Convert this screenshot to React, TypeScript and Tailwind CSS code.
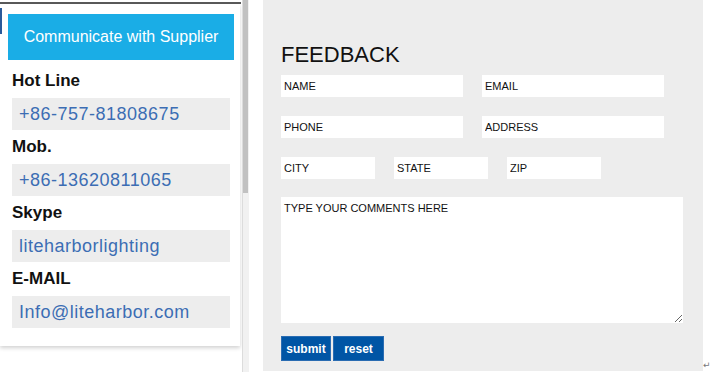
import React from "react";

const contacts = [
  { label: "Hot Line", value: "+86-757-81808675" },
  { label: "Mob.", value: "+86-13620811065" },
  { label: "Skype", value: "liteharborlighting" },
  { label: "E-MAIL", value: "Info@liteharbor.com" },
];

const field =
  "h-[22px] bg-white pl-[3px] text-[11px] text-[#111] outline-none placeholder:text-[#111]";

export default function App() {
  return (
    <div className="flex items-start w-[711px] h-[383px] overflow-hidden bg-white font-['Liberation_Sans',Arial,sans-serif]">
      {/* ── Contact sidebar ── */}
      <div className="flex shrink-0 flex-col w-[242px]">
        <div className="mt-[2px] h-[2px] w-[241px] bg-[#5a5a5a]" />
        <div className="flex w-[240px] bg-white shadow-[0_2px_4px_rgba(0,0,0,0.18)]">
          <div className="mt-[4px] h-[26px] w-[2px] bg-[#2a5a9a]" />
          <div className="flex flex-1 flex-col pt-[10px] pl-[6px] pr-[6px] pb-[18px]">
            <button className="h-[46px] w-full bg-[#1aade6] text-[16px] text-white">
              Communicate with Supplier
            </button>
            <div className="mt-[4px] flex flex-col px-[4px]">
              {contacts.map((c) => (
                <div key={c.label} className="flex flex-col">
                  <div className="h-[34px] leading-[34px] text-[17px] font-bold text-[#111]">
                    {c.label}
                  </div>
                  <div className="h-[32px] bg-[#ededed] pl-[7px] leading-[32px] text-[18px] tracking-[0.5px] text-[#3c6db4]">
                    {c.value}
                  </div>
                </div>
              ))}
            </div>
          </div>
        </div>
      </div>

      {/* scrollbar */}
      <div className="h-[372px] w-[7px] shrink-0 border-l border-[#dcdcdc] bg-[#f1f1f1] pr-px">
        <div className="h-[193px] w-full bg-[#c1c1c1]" />
      </div>

      {/* ── Feedback form ── */}
      <div className="ml-[14px] flex shrink-0 items-end">
        <div className="flex h-[371px] w-[440px] shrink-0 flex-col bg-[#ededed] pl-[18px] pt-[42px]">
          <h2 className="h-[26px] leading-[26px] text-[22px] text-[#111]">FEEDBACK</h2>
          <div className="mt-[7px] flex flex-col gap-[19px]">
            <div className="flex gap-[19px]">
              <input className={`${field} w-[182px]`} placeholder="NAME" />
              <input className={`${field} w-[182px]`} placeholder="EMAIL" />
            </div>
            <div className="flex gap-[19px]">
              <input className={`${field} w-[182px]`} placeholder="PHONE" />
              <input className={`${field} w-[182px]`} placeholder="ADDRESS" />
            </div>
            <div className="flex gap-[19px]">
              <input className={`${field} w-[94px]`} placeholder="CITY" />
              <input className={`${field} w-[94px]`} placeholder="STATE" />
              <input className={`${field} w-[94px]`} placeholder="ZIP" />
            </div>
          </div>
          <textarea
            className="mt-[18px] h-[126px] w-[402px] bg-white p-[3px] text-[11px] text-[#111] outline-none placeholder:text-[#111]"
            placeholder="TYPE YOUR COMMENTS HERE"
          />
          <div className="mt-[13px] flex gap-[2px]">
            <button className="h-[25px] w-[50px] border border-[#2a6cb2] bg-[#0055a5] text-[12px] font-bold text-white">
              submit
            </button>
            <button className="h-[25px] w-[51px] border border-[#2a6cb2] bg-[#0055a5] text-[12px] font-bold text-white">
              reset
            </button>
          </div>
        </div>
        <span className="mb-[1px] shrink-0 text-[9px] leading-none text-[#777] font-['DejaVu_Sans',sans-serif]">↵</span>
      </div>
    </div>
  );
}
